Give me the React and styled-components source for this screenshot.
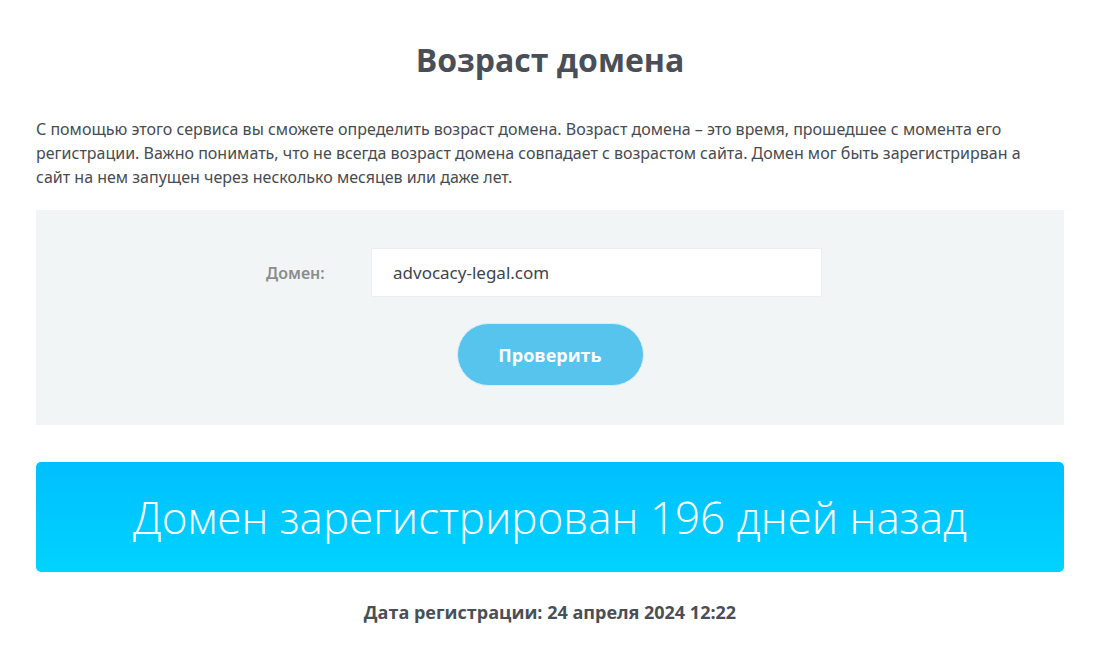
import React from "react";
import styled, { createGlobalStyle } from "styled-components";

const GlobalStyle = createGlobalStyle`
  body {
    margin: 0;
    background: #fff;
    font-family: "Open Sans", "Noto Sans", sans-serif;
    color: #454a52;
  }
`;

const Page = styled.main`
  width: 1028px;
  margin: 0 auto;
  padding-top: 38px;
`;

const Title = styled.h1`
  margin: 0;
  text-align: center;
  font-family: "Open Sans", sans-serif;
  font-weight: 700;
  font-size: 32px;
  line-height: 44px;
  color: #4a4f57;
`;

const Intro = styled.p`
  margin: 35px 0 21px;
  padding-right: 40px;
  font-family: "Noto Sans", sans-serif;
  font-size: 16px;
  line-height: 24px;
  color: #474b52;
`;

const FormPanel = styled.form`
  background: #f2f5f6;
  height: 215px;
  padding-top: 38px;
  box-sizing: border-box;
  display: flex;
  flex-direction: column;
  align-items: center;
  gap: 26px;
`;

const FieldRow = styled.div`
  display: flex;
  align-items: center;
  margin-right: 12px;
`;

const Label = styled.label`
  width: 105px;
  font-family: "Noto Sans", sans-serif;
  font-weight: 600;
  font-size: 16px;
  color: #8c8c8c;
`;

const Input = styled.input`
  width: 451px;
  height: 49px;
  box-sizing: border-box;
  border: 1px solid #eceff1;
  background: #fff;
  padding: 0 21px;
  font-family: "Noto Sans", sans-serif;
  font-size: 17px;
  color: #3f444b;
  outline: none;
`;

const Button = styled.button`
  width: 187px;
  height: 63px;
  border: 1px solid #d6eef8;
  border-radius: 32px;
  background: #56c4ec;
  color: #fff;
  font-family: "Open Sans", sans-serif;
  font-weight: 700;
  font-size: 18px;
  cursor: pointer;
`;

const Result = styled.div`
  margin-top: 37px;
  height: 110px;
  border-radius: 5px;
  background: linear-gradient(180deg, #00bfff 0%, #00d3ff 100%);
  display: flex;
  align-items: center;
  justify-content: center;
  color: #fff;
  font-family: "Open Sans", sans-serif;
  font-weight: 300;
  font-size: 44px;
`;

const RegDate = styled.p`
  margin: 28px 0 0;
  text-align: center;
  font-family: "Open Sans", sans-serif;
  font-weight: 700;
  font-size: 18px;
  color: #4a4f57;
`;

export default function App() {
  return (
    <>
      <GlobalStyle />
      <Page>
        <Title>Возраст домена</Title>
        <Intro>
          С помощью этого сервиса вы сможете определить возраст домена. Возраст
          домена – это время, прошедшее с момента его регистрации. Важно
          понимать, что не всегда возраст домена совпадает с возрастом сайта.
          Домен мог быть зарегистрирван а сайт на нем запущен через несколько
          месяцев или даже лет.
        </Intro>
        <FormPanel onSubmit={(e) => e.preventDefault()}>
          <FieldRow>
            <Label htmlFor="domain">Домен:</Label>
            <Input id="domain" defaultValue="advocacy-legal.com" />
          </FieldRow>
          <Button type="submit">Проверить</Button>
        </FormPanel>
        <Result>Домен зарегистрирован 196 дней назад</Result>
        <RegDate>Дата регистрации: 24 апреля 2024 12:22</RegDate>
      </Page>
    </>
  );
}
